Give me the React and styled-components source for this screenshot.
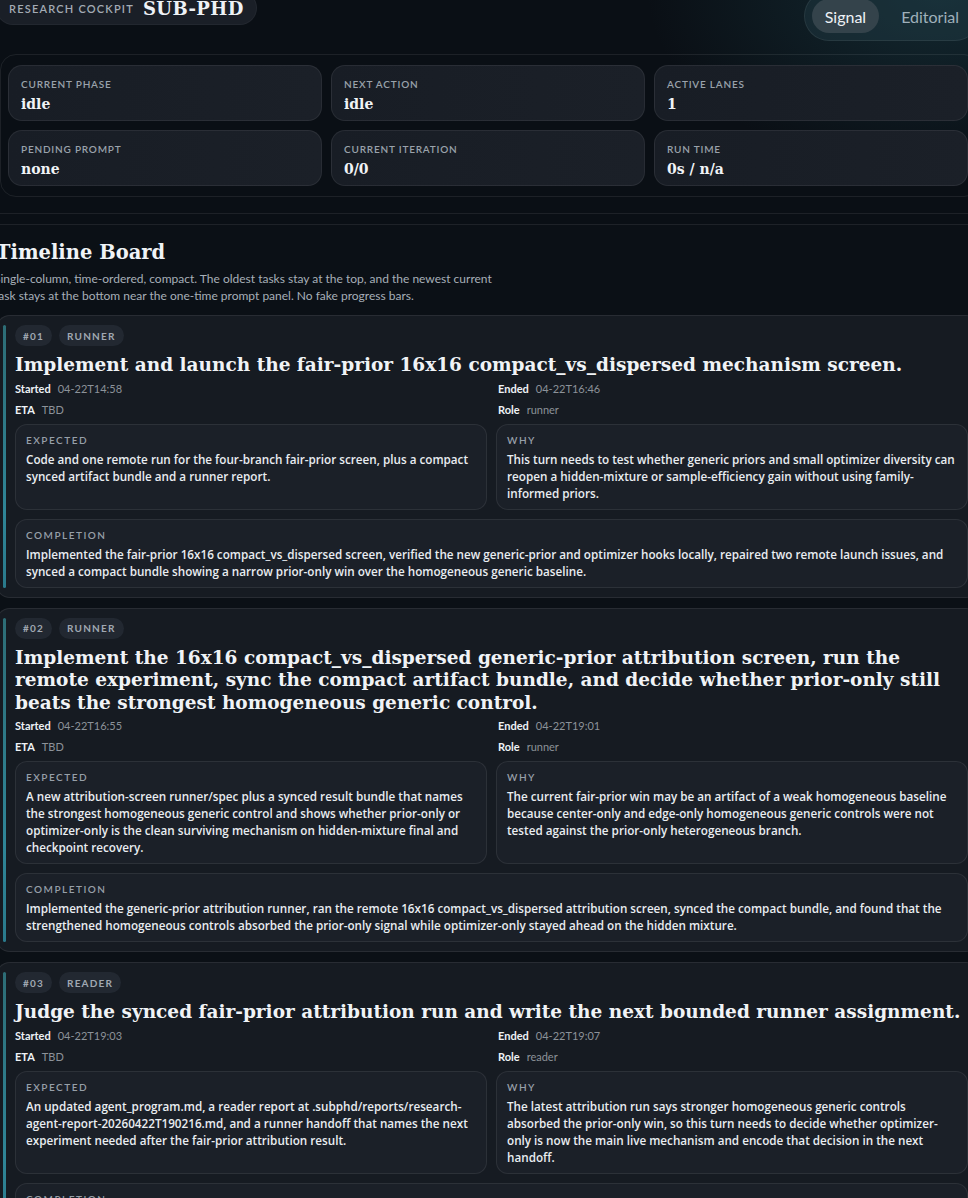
import React from "react";
import styled, { createGlobalStyle } from "styled-components";

const GlobalStyle = createGlobalStyle`
    html, body {
        margin: 0;
        height: 100%;
        overflow: hidden;
        background: #0a0f15;
    }
    body {
        font-family: Lato, "Noto Sans", sans-serif;
        color: #e8edf2;
    }
`;

const serif = `"DejaVu Serif", Georgia, serif`;

const Page = styled.div`
    width: 984px;
    margin: -9px 0 0 -4px;
    background: radial-gradient(ellipse 420px 260px at 96% 0%, rgba(38, 96, 108, 0.32), transparent 70%);
`;

const Hero = styled.header`
    padding-bottom: 16px;
    border-bottom: 1px solid rgba(255, 255, 255, 0.08);
`;

const TopBar = styled.div`
    display: flex;
    justify-content: space-between;
    align-items: flex-start;
`;

const Brand = styled.div`
    display: flex;
    align-items: center;
    gap: 9px;
    height: 34px;
    box-sizing: border-box;
    padding: 0 12px 0 12px;
    border-radius: 18px;
    background: #1a1f27;
    border: 1px solid rgba(255, 255, 255, 0.04);
    .kicker {
        font-size: 11px;
        letter-spacing: 1.2px;
        color: #a3abb4;
        font-weight: 600;
    }
    .name {
        font-family: ${serif};
        font-weight: 700;
        font-size: 18px;
        letter-spacing: 0.4px;
        color: #eef2f6;
    }
`;

const Toggle = styled.div`
    display: flex;
    align-items: center;
    gap: 9px;
    padding: 7px;
    border-radius: 26px;
    background: rgba(36, 62, 72, 0.4);
    border: 1px solid rgba(255, 255, 255, 0.07);
`;

const ToggleItem = styled.div`
    height: 34px;
    display: flex;
    align-items: center;
    padding: 0 13px;
    border-radius: 17px;
    font-size: 16px;
    color: ${(p) => (p.$active ? "#eef2f6" : "#9fb0ba")};
    background: ${(p) => (p.$active ? "#34434b" : "transparent")};
`;

const StatsPanel = styled.div`
    margin: 13px 0 0 4px;
    padding: 10px 7px;
    border: 1px solid rgba(255, 255, 255, 0.08);
    border-radius: 16px;
    display: grid;
    grid-template-columns: 314px 314px 314px;
    gap: 9px;
`;

const StatCard = styled.div`
    height: 56px;
    box-sizing: border-box;
    padding: 11px 12px 0;
    border-radius: 14px;
    background: linear-gradient(90deg, #181d25, #1b2028);
    border: 1px solid rgba(255, 255, 255, 0.07);
`;

const StatLabel = styled.div`
    font-size: 10px;
    line-height: 14px;
    letter-spacing: 0.8px;
    font-weight: 600;
    color: #9aa2ab;
    text-transform: uppercase;
`;

const StatValue = styled.div`
    margin-top: 4px;
    font-family: ${serif};
    font-weight: 700;
    font-size: 14px;
    line-height: 18px;
    color: #f0f3f6;
`;

const Section = styled.section`
    margin-top: 10px;
    border-top: 1px solid rgba(255, 255, 255, 0.08);
    padding-top: 13px;
    background: #0b1016;
`;

const Heading = styled.h2`
    margin: 0;
    font-family: ${serif};
    font-weight: 700;
    font-size: 19.5px;
    line-height: 30px;
    color: #f0f3f6;
`;

const Lead = styled.p`
    margin: 2px 0 0 -2px;
    max-width: 510px;
    font-size: 12px;
    line-height: 17px;
    color: #a7afb8;
`;

const Cards = styled.div`
    margin-top: 11px;
    display: flex;
    flex-direction: column;
    gap: 10px;
`;

const Card = styled.article`
    display: flex;
    gap: 9px;
    padding: 0 11px 0 6px;
    border-radius: 14px;
    background: #161b22;
    border: 1px solid rgba(255, 255, 255, 0.08);
`;

const Accent = styled.div`
    width: 3px;
    flex: none;
    margin: 9px 0;
    border-radius: 2px;
    background: linear-gradient(180deg, #2d6d76, #2f8597 70%, #2a7a8c);
`;

const Body = styled.div`
    flex: 1;
    padding: 9px 0 9px;
`;

const Chips = styled.div`
    display: flex;
    gap: 7px;
`;

const Chip = styled.span`
    height: 21px;
    display: inline-flex;
    align-items: center;
    padding: 0 8px;
    border-radius: 11px;
    background: #222831;
    font-size: 10px;
    font-weight: 700;
    letter-spacing: 1.2px;
    color: #a0a8b2;
`;

const Title = styled.h3`
    margin: 8px 0 1px;
    font-family: ${serif};
    font-weight: 700;
    font-size: 18.5px;
    line-height: 22.5px;
    color: #f0f3f6;
`;

const Grid = styled.div`
    display: grid;
    grid-template-columns: 1fr 1fr;
    column-gap: 9px;
    row-gap: ${(p) => p.$gap || "9px"};
    margin-top: ${(p) => p.$top || "0"};
`;

const Meta = styled.div`
    height: 21px;
    display: flex;
    align-items: center;
    gap: 7px;
    padding-left: ${(p) => (p.$right ? "2px" : "0")};
    font-size: 11px;
    b {
        font-weight: 700;
        color: #eef2f6;
    }
    span {
        color: #8c9299;
    }
`;

const Box = styled.div`
    padding: 8px 10px 7px;
    border-radius: 12px;
    background: #1b2028;
    border: 1px solid rgba(255, 255, 255, 0.08);
    grid-column: ${(p) => (p.$wide ? "1 / -1" : "auto")};
`;

const BoxLabel = styled.div`
    font-size: 10px;
    line-height: 14px;
    letter-spacing: 1.5px;
    font-weight: 600;
    color: #979fa8;
`;

const BoxText = styled.div`
    margin-top: 4px;
    font-family: "Open Sans", Lato, sans-serif;
    font-size: 11.7px;
    line-height: 17px;
    font-weight: 600;
    color: #e9edf1;
`;

const stats = [
    ["Current phase", "idle"],
    ["Next action", "idle"],
    ["Active lanes", "1"],
    ["Pending prompt", "none"],
    ["Current iteration", "0/0"],
    ["Run time", "0s / n/a"],
];

const tasks = [
    {
        id: "#01",
        role: "runner",
        title: "Implement and launch the fair-prior 16x16 compact_vs_dispersed mechanism screen.",
        started: "04-22T14:58",
        ended: "04-22T16:46",
        expected:
            "Code and one remote run for the four-branch fair-prior screen, plus a compact synced artifact bundle and a runner report.",
        why: "This turn needs to test whether generic priors and small optimizer diversity can reopen a hidden-mixture or sample-efficiency gain without using family-informed priors.",
        completion:
            "Implemented the fair-prior 16x16 compact_vs_dispersed screen, verified the new generic-prior and optimizer hooks locally, repaired two remote launch issues, and synced a compact bundle showing a narrow prior-only win over the homogeneous generic baseline.",
    },
    {
        id: "#02",
        role: "runner",
        title: "Implement the 16x16 compact_vs_dispersed generic-prior attribution screen, run the remote experiment, sync the compact artifact bundle, and decide whether prior-only still beats the strongest homogeneous generic control.",
        started: "04-22T16:55",
        ended: "04-22T19:01",
        expected:
            "A new attribution-screen runner/spec plus a synced result bundle that names the strongest homogeneous generic control and shows whether prior-only or optimizer-only is the clean surviving mechanism on hidden-mixture final and checkpoint recovery.",
        why: "The current fair-prior win may be an artifact of a weak homogeneous baseline because center-only and edge-only homogeneous generic controls were not tested against the prior-only heterogeneous branch.",
        completion:
            "Implemented the generic-prior attribution runner, ran the remote 16x16 compact_vs_dispersed attribution screen, synced the compact bundle, and found that the strengthened homogeneous controls absorbed the prior-only signal while optimizer-only stayed ahead on the hidden mixture.",
    },
    {
        id: "#03",
        role: "reader",
        title: "Judge the synced fair-prior attribution run and write the next bounded runner assignment.",
        started: "04-22T19:03",
        ended: "04-22T19:07",
        expected:
            "An updated agent_program.md, a reader report at .subphd/reports/research-agent-report-20260422T190216.md, and a runner handoff that names the next experiment needed after the fair-prior attribution result.",
        why: "The latest attribution run says stronger homogeneous generic controls absorbed the prior-only win, so this turn needs to decide whether optimizer-only is now the main live mechanism and encode that decision in the next handoff.",
        completion:
            "Judged the attribution run, updated agent_program.md, wrote the reader report, and handed the runner an optimizer-only follow-up assignment.",
    },
];

const TaskCard = ({ task }) => (
    <Card>
        <Accent />
        <Body>
            <Chips>
                <Chip>{task.id}</Chip>
                <Chip>{task.role.toUpperCase()}</Chip>
            </Chips>
            <Title>{task.title}</Title>
            <Grid $gap="0px">
                <Meta>
                    <b>Started</b>
                    <span>{task.started}</span>
                </Meta>
                <Meta $right>
                    <b>Ended</b>
                    <span>{task.ended}</span>
                </Meta>
                <Meta>
                    <b>ETA</b>
                    <span>TBD</span>
                </Meta>
                <Meta $right>
                    <b>Role</b>
                    <span>{task.role}</span>
                </Meta>
            </Grid>
            <Grid $top="4px">
                <Box>
                    <BoxLabel>EXPECTED</BoxLabel>
                    <BoxText>{task.expected}</BoxText>
                </Box>
                <Box>
                    <BoxLabel>WHY</BoxLabel>
                    <BoxText>{task.why}</BoxText>
                </Box>
                <Box $wide>
                    <BoxLabel>COMPLETION</BoxLabel>
                    <BoxText>{task.completion}</BoxText>
                </Box>
            </Grid>
        </Body>
    </Card>
);

const App = () => {
    return (
        <>
            <GlobalStyle />
            <Page>
                <Hero>
                    <TopBar>
                        <Brand>
                            <span className="kicker">RESEARCH COCKPIT</span>
                            <span className="name">SUB-PHD</span>
                        </Brand>
                        <Toggle>
                            <ToggleItem $active>Signal</ToggleItem>
                            <ToggleItem>Editorial</ToggleItem>
                        </Toggle>
                    </TopBar>
                    <StatsPanel>
                        {stats.map(([label, value]) => (
                            <StatCard key={label}>
                                <StatLabel>{label}</StatLabel>
                                <StatValue>{value}</StatValue>
                            </StatCard>
                        ))}
                    </StatsPanel>
                </Hero>
                <Section>
                    <Heading>Timeline Board</Heading>
                    <Lead>
                        Single-column, time-ordered, compact. The oldest tasks stay at the top, and the newest current
                        task stays at the bottom near the one-time prompt panel. No fake progress bars.
                    </Lead>
                    <Cards>
                        {tasks.map((t) => (
                            <TaskCard key={t.id} task={t} />
                        ))}
                    </Cards>
                </Section>
            </Page>
        </>
    );
};

export default App;
